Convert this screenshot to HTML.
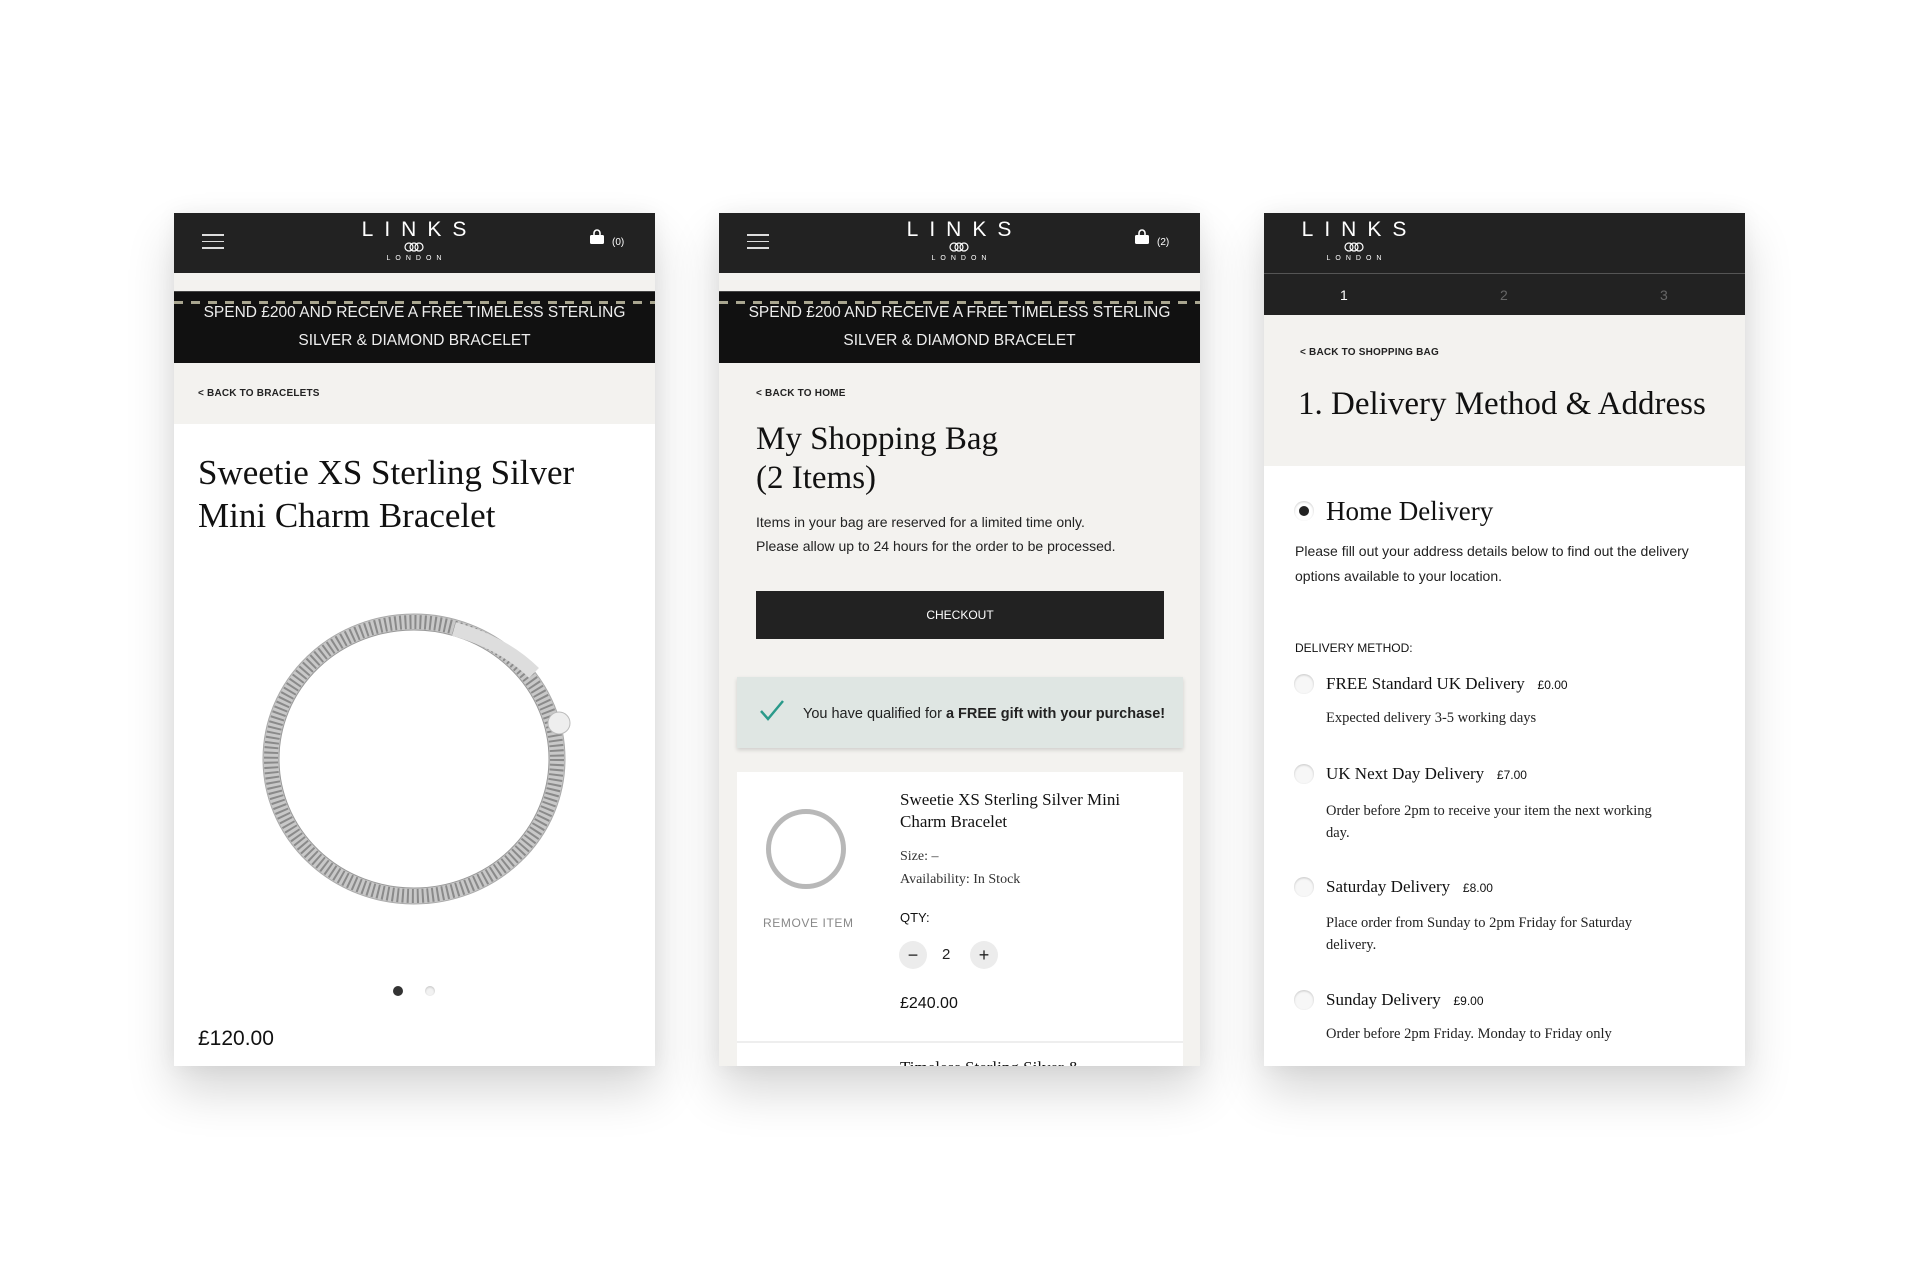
<!DOCTYPE html>
<html><head><meta charset="utf-8"><style>
*{margin:0;padding:0;box-sizing:border-box}
body{width:1920px;height:1280px;background:#fff;position:relative;overflow:hidden;font-family:"Liberation Sans",sans-serif;color:#222}
.p{position:absolute;top:213px;width:481px;height:853px;overflow:hidden;background:#f3f2ef;box-shadow:0 25px 45px rgba(0,0,0,0.16),0 0 20px rgba(0,0,0,0.05)}
.a{position:absolute;white-space:nowrap}
.hdr{position:absolute;left:0;top:0;width:481px;height:60px;background:#222}
.logo{position:absolute;text-align:center;color:#fff;width:130px}
.logo .l{font-size:21px;letter-spacing:11px;line-height:20px;padding-left:11px}
.logo svg{display:block;margin:2px auto 0}
.logo .d{font-size:7px;letter-spacing:5px;line-height:10px;padding-left:5px;margin-top:2px}
.ban{position:absolute;left:0;top:78px;width:481px;height:72px;background:#111;color:#eee;text-align:center;font-size:15.5px;line-height:28px;padding-top:7px;border-top:1px solid #444}
.dash{position:absolute;left:0;top:9px;width:481px;height:3px;background:repeating-linear-gradient(90deg,#a9a690 0 9px,transparent 9px 17px)}
.back{font-size:10px;font-weight:bold;letter-spacing:0.2px;color:#222}
.serif{font-family:"Liberation Serif",serif}
.ham span{display:block;width:22px;height:1.5px;background:#ddd;margin-bottom:5px}
.radio{position:absolute;width:20px;height:20px;border-radius:50%;background:#f7f7f7;box-shadow:inset 0 1px 2px rgba(0,0,0,0.2)}
</style></head><body>

<!-- Panel 1 -->
<div class="p" style="left:174px">
 <div class="hdr">
  <div class="a ham" style="left:28px;top:21px"><span></span><span></span><span></span></div>
  <div class="logo" style="left:175px;top:7px"><div class="l">LINKS</div><svg width="22" height="10" viewBox="0 0 22 10"><g fill="none" stroke="#fff" stroke-width="1.2"><circle cx="6" cy="5" r="4"/><circle cx="11" cy="5" r="4"/><circle cx="16" cy="5" r="4"/></g></svg><div class="d">LONDON</div></div>
  <svg class="a" style="left:415px;top:16px" width="16" height="16" viewBox="0 0 16 16"><path d="M5 6V4a3 3 0 0 1 6 0v2" stroke="#fff" stroke-width="1.6" fill="none"/><rect x="1" y="6" width="14" height="9" rx="1.5" fill="#fff"/></svg>
  <div class="a" style="left:438px;top:24px;color:#fff;font-size:10px">(0)</div>
 </div>
 <div class="ban"><div class="dash"></div>SPEND £200 AND RECEIVE A FREE TIMELESS STERLING<br>SILVER &amp; DIAMOND BRACELET</div>
 <div class="a back" style="left:24px;top:175px">&lt; BACK TO BRACELETS</div>
 <div class="a" style="left:0;top:211px;width:481px;height:642px;background:#fff"></div>
 <div class="a serif" style="left:24px;top:238px;font-size:35px;line-height:43px;color:#111">Sweetie XS Sterling Silver<br>Mini Charm Bracelet</div>
 <svg class="a" style="left:80px;top:390px" width="320" height="310" viewBox="0 0 320 310">
  <ellipse cx="160" cy="156" rx="143" ry="137" fill="none" stroke="#c8c8c8" stroke-width="16"/>
  <ellipse cx="160" cy="156" rx="143" ry="137" fill="none" stroke="#8a8a8a" stroke-width="14" stroke-dasharray="2 3"/>
  <ellipse cx="160" cy="156" rx="135" ry="129" fill="none" stroke="#999" stroke-width="1"/>
  <ellipse cx="160" cy="156" rx="151" ry="145" fill="none" stroke="#aaa" stroke-width="1"/>
  <path d="M200 26 Q250 40 280 70" stroke="#ddd" stroke-width="14" fill="none"/>
  <circle cx="305" cy="120" r="11" fill="#eee" stroke="#bbb"/>
 </svg>
 <div class="a" style="left:219px;top:773px;width:10px;height:10px;border-radius:50%;background:#333"></div>
 <div class="a" style="left:251px;top:773px;width:10px;height:10px;border-radius:50%;background:#f2f2f2;box-shadow:inset 0 1px 2px rgba(0,0,0,.2)"></div>
 <div class="a" style="left:24px;top:814px;font-size:21px;color:#111">£120.00</div>
</div>

<!-- Panel 2 -->
<div class="p" style="left:719px">
 <div class="hdr">
  <div class="a ham" style="left:28px;top:21px"><span></span><span></span><span></span></div>
  <div class="logo" style="left:175px;top:7px"><div class="l">LINKS</div><svg width="22" height="10" viewBox="0 0 22 10"><g fill="none" stroke="#fff" stroke-width="1.2"><circle cx="6" cy="5" r="4"/><circle cx="11" cy="5" r="4"/><circle cx="16" cy="5" r="4"/></g></svg><div class="d">LONDON</div></div>
  <svg class="a" style="left:415px;top:16px" width="16" height="16" viewBox="0 0 16 16"><path d="M5 6V4a3 3 0 0 1 6 0v2" stroke="#fff" stroke-width="1.6" fill="none"/><rect x="1" y="6" width="14" height="9" rx="1.5" fill="#fff"/></svg>
  <div class="a" style="left:438px;top:24px;color:#fff;font-size:10px">(2)</div>
 </div>
 <div class="ban"><div class="dash"></div>SPEND £200 AND RECEIVE A FREE TIMELESS STERLING<br>SILVER &amp; DIAMOND BRACELET</div>
 <div class="a back" style="left:37px;top:175px">&lt; BACK TO HOME</div>
 <div class="a serif" style="left:37px;top:207px;font-size:33px;line-height:39px;color:#111">My Shopping Bag<br>(2 Items)</div>
 <div class="a" style="left:37px;top:297px;font-size:14px;line-height:24px;color:#222">Items in your bag are reserved for a limited time only.<br>Please allow up to 24 hours for the order to be processed.</div>
 <div class="a" style="left:37px;top:378px;width:408px;height:48px;background:#222;color:#fff;font-size:12px;text-align:center;line-height:48px">CHECKOUT</div>
 <div class="a" style="left:18px;top:464px;width:446px;height:71px;background:#dfe6e3;box-shadow:0 2px 4px rgba(0,0,0,.15)"></div>
 <svg class="a" style="left:40px;top:486px" width="26" height="22" viewBox="0 0 26 22"><path d="M2 12l7 8L24 2" stroke="#2a9a8a" stroke-width="2.5" fill="none"/></svg>
 <div class="a" style="left:84px;top:493px;font-size:14.5px;color:#222">You have qualified for <b>a FREE gift with your purchase!</b></div>
 <div class="a" style="left:18px;top:559px;width:446px;height:300px;background:#fff"></div>
 <div class="a" style="left:18px;top:828px;width:446px;height:2px;background:#eee"></div>
 <div class="a" style="left:47px;top:596px;width:80px;height:80px;border-radius:50%;border:5px solid #b8b8b8"></div>
 <div class="a" style="left:44px;top:703px;font-size:12px;letter-spacing:.6px;color:#888">REMOVE ITEM</div>
 <div class="a serif" style="left:181px;top:576px;font-size:17px;line-height:22px;color:#111">Sweetie XS Sterling Silver Mini<br>Charm Bracelet</div>
 <div class="a serif" style="left:181px;top:632px;font-size:14px;line-height:23px;color:#333">Size: –<br>Availability: In Stock</div>
 <div class="a" style="left:181px;top:697px;font-size:13px;color:#111">QTY:</div>
 <div class="a" style="left:180px;top:728px;width:28px;height:28px;border-radius:50%;background:#ececec;text-align:center;line-height:28px;font-size:18px">−</div>
 <div class="a" style="left:223px;top:733px;font-size:15px">2</div>
 <div class="a" style="left:251px;top:728px;width:28px;height:28px;border-radius:50%;background:#ececec;text-align:center;line-height:28px;font-size:18px">+</div>
 <div class="a" style="left:181px;top:782px;font-size:16px;color:#111">£240.00</div>
 <div class="a serif" style="left:181px;top:845px;font-size:17px;color:#111">Timeless Sterling Silver &amp;</div>
</div>

<!-- Panel 3 -->
<div class="p" style="left:1264px">
 <div class="a" style="left:0;top:0;width:481px;height:102px;background:#222"></div>
 <div class="a" style="left:0;top:60px;width:481px;height:1px;background:#555"></div>
 <div class="logo" style="left:25px;top:7px"><div class="l">LINKS</div><svg width="22" height="10" viewBox="0 0 22 10"><g fill="none" stroke="#fff" stroke-width="1.2"><circle cx="6" cy="5" r="4"/><circle cx="11" cy="5" r="4"/><circle cx="16" cy="5" r="4"/></g></svg><div class="d">LONDON</div></div>
 <div class="a" style="left:76px;top:74px;color:#fff;font-size:14px">1</div>
 <div class="a" style="left:236px;top:74px;color:#666;font-size:14px">2</div>
 <div class="a" style="left:396px;top:74px;color:#666;font-size:14px">3</div>
 <div class="a back" style="left:36px;top:134px">&lt; BACK TO SHOPPING BAG</div>
 <div class="a serif" style="left:34px;top:171px;font-size:33px;line-height:40px;color:#111">1. Delivery Method &amp; Address</div>
 <div class="a" style="left:0;top:253px;width:481px;height:600px;background:#fff"></div>
 <div class="radio" style="left:30px;top:288px;background:#fff"></div>
 <div class="a" style="left:35px;top:293px;width:10px;height:10px;border-radius:50%;background:#222"></div>
 <div class="a serif" style="left:62px;top:283px;font-size:27px;color:#111">Home Delivery</div>
 <div class="a" style="left:31px;top:326px;font-size:14px;line-height:25px;color:#222">Please fill out your address details below to find out the delivery<br>options available to your location.</div>
 <div class="a" style="left:31px;top:428px;font-size:12px;color:#111">DELIVERY METHOD:</div>

 <div class="radio" style="left:30px;top:461px"></div>
 <div class="a serif" style="left:62px;top:461px;font-size:17px;color:#111">FREE Standard UK Delivery &nbsp;&nbsp;<span style="font-family:'Liberation Sans';font-size:12px">£0.00</span></div>
 <div class="a serif" style="left:62px;top:497px;font-size:14.5px;color:#222">Expected delivery 3-5 working days</div>

 <div class="radio" style="left:30px;top:551px"></div>
 <div class="a serif" style="left:62px;top:551px;font-size:17px;color:#111">UK Next Day Delivery &nbsp;&nbsp;<span style="font-family:'Liberation Sans';font-size:12px">£7.00</span></div>
 <div class="a serif" style="left:62px;top:587px;font-size:14.5px;line-height:22px;color:#222">Order before 2pm to receive your item the next working<br>day.</div>

 <div class="radio" style="left:30px;top:664px"></div>
 <div class="a serif" style="left:62px;top:664px;font-size:17px;color:#111">Saturday Delivery &nbsp;&nbsp;<span style="font-family:'Liberation Sans';font-size:12px">£8.00</span></div>
 <div class="a serif" style="left:62px;top:699px;font-size:14.5px;line-height:22px;color:#222">Place order from Sunday to 2pm Friday for Saturday<br>delivery.</div>

 <div class="radio" style="left:30px;top:777px"></div>
 <div class="a serif" style="left:62px;top:777px;font-size:17px;color:#111">Sunday Delivery &nbsp;&nbsp;<span style="font-family:'Liberation Sans';font-size:12px">£9.00</span></div>
 <div class="a serif" style="left:62px;top:813px;font-size:14.5px;color:#222">Order before 2pm Friday. Monday to Friday only</div>
</div>
</body></html>
